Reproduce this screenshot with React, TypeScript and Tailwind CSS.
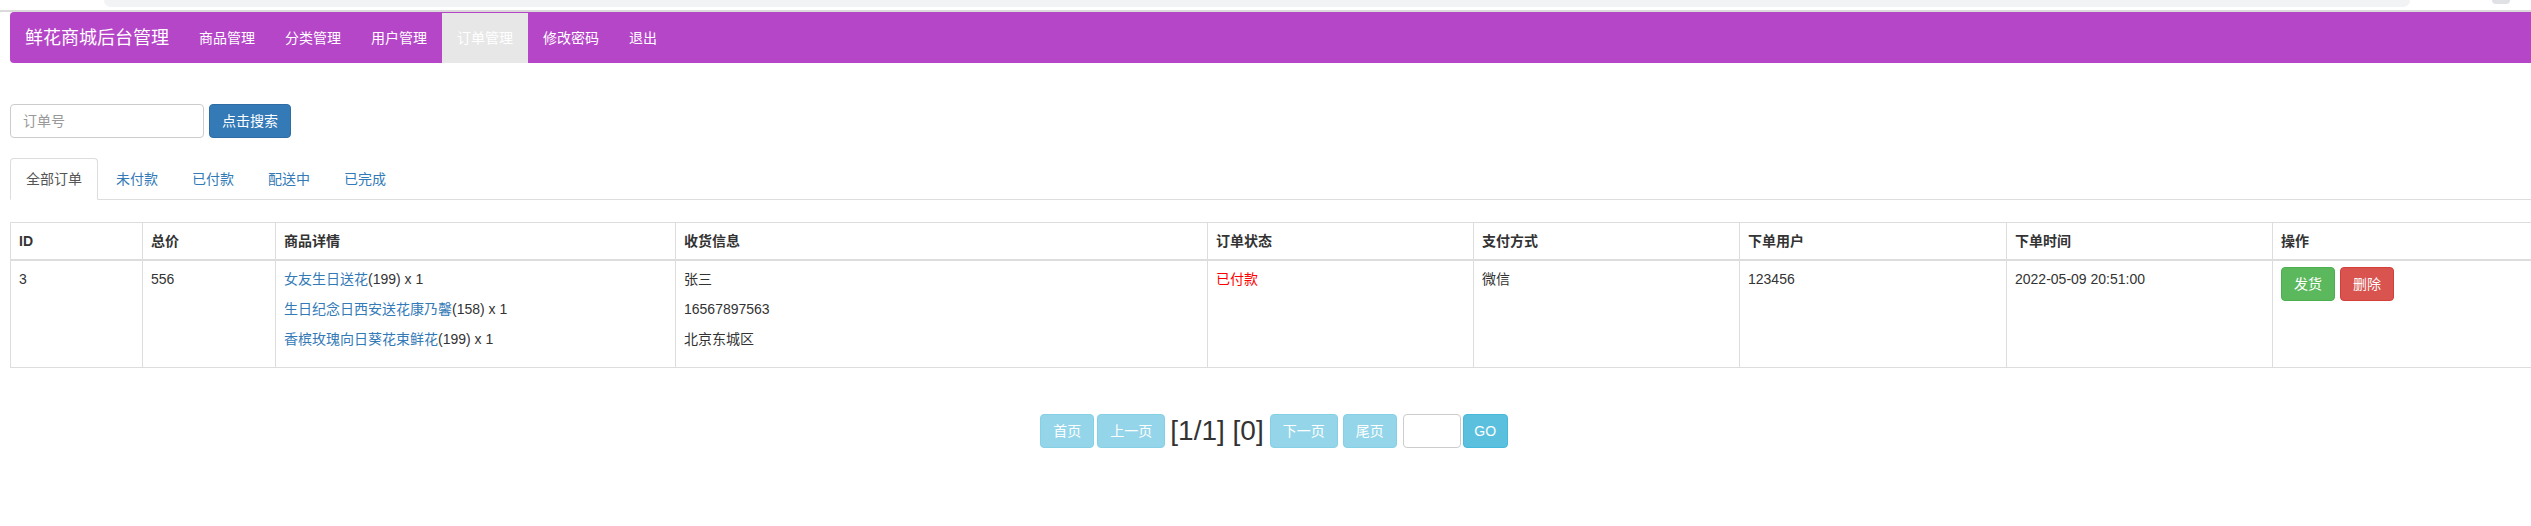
import React from "react";

const navItems = ["商品管理", "分类管理", "用户管理", "订单管理", "修改密码", "退出"];
const tabs = ["全部订单", "未付款", "已付款", "配送中", "已完成"];

const columns = [
  { title: "ID", w: "w-[132px]" },
  { title: "总价", w: "w-[133px]" },
  { title: "商品详情", w: "w-[400px]" },
  { title: "收货信息", w: "w-[532px]" },
  { title: "订单状态", w: "w-[266px]" },
  { title: "支付方式", w: "w-[266px]" },
  { title: "下单用户", w: "w-[267px]" },
  { title: "下单时间", w: "w-[266px]" },
  { title: "操作", w: "w-[266px]" },
];

const goods = [
  { name: "女友生日送花", price: 199, count: 1 },
  { name: "生日纪念日西安送花康乃馨", price: 158, count: 1 },
  { name: "香槟玫瑰向日葵花束鲜花", price: 199, count: 1 },
];

const address = ["张三", "16567897563", "北京东城区"];

const Navbar = () => (
  <nav className="flex h-[51px] pt-[1px] bg-[#b546c8] rounded-[4px]">
    <span className="px-[15px] h-[50px] leading-[50px] text-[18px] text-white">
      鲜花商城后台管理
    </span>
    {navItems.map((item) => (
      <a
        key={item}
        className={`px-[15px] h-[50px] leading-[50px] text-[14px] text-white ${
          item === "订单管理" ? "bg-[#e7e7e7]" : ""
        }`}
      >
        {item}
      </a>
    ))}
  </nav>
);

const SearchBar = () => (
  <div className="flex items-center mt-[41px]">
    <div className="w-[194px] h-[34px] border border-[#cccccc] rounded-[4px] px-[12px] leading-[32px] text-[14px] text-[#999999]">
      订单号
    </div>
    <button className="ml-[5px] w-[82px] h-[34px] bg-[#337ab7] border border-[#2e6da4] rounded-[4px] text-[14px] text-white">
      点击搜索
    </button>
  </div>
);

const Tabs = () => (
  <ul className="flex mt-[20px] border-b border-[#dddddd]">
    {tabs.map((tab, i) => (
      <li key={tab} className="mr-[2px] -mb-[1px]">
        <a
          className={`block px-[15px] py-[10px] leading-5 text-[14px] border rounded-t-[4px] ${
            i === 0
              ? "border-[#dddddd] border-b-white bg-white text-[#555555]"
              : "border-transparent text-[#337ab7]"
          }`}
        >
          {tab}
        </a>
      </li>
    ))}
  </ul>
);

const OrderTable = () => (
  <table className="mt-[22px] w-[2528px] table-fixed border-collapse text-[14px] text-[#333333]">
    <colgroup>
      {columns.map((c) => (
        <col key={c.title} className={c.w} />
      ))}
    </colgroup>
    <thead>
      <tr>
        {columns.map((c) => (
          <th
            key={c.title}
            className="border border-[#dddddd] border-b-2 p-2 leading-5 text-left font-bold"
          >
            {c.title}
          </th>
        ))}
      </tr>
    </thead>
    <tbody>
      <tr className="align-top">
        <td className="border border-[#dddddd] p-2 leading-5">3</td>
        <td className="border border-[#dddddd] p-2 leading-5">556</td>
        <td className="border border-[#dddddd] p-2 leading-5">
          {goods.map((g) => (
            <p key={g.name} className="mb-[10px]">
              <a className="text-[#337ab7]">{g.name}</a>({g.price}) x {g.count}
            </p>
          ))}
        </td>
        <td className="border border-[#dddddd] p-2 leading-5">
          {address.map((a) => (
            <p key={a} className="mb-[10px]">
              {a}
            </p>
          ))}
        </td>
        <td className="border border-[#dddddd] p-2 leading-5 text-[#ff0000]">已付款</td>
        <td className="border border-[#dddddd] p-2 leading-5">微信</td>
        <td className="border border-[#dddddd] p-2 leading-5">123456</td>
        <td className="border border-[#dddddd] p-2 leading-5">2022-05-09 20:51:00</td>
        <td className="border border-[#dddddd] px-2 pt-[6px] leading-5">
          <div className="flex gap-[5px]">
            <button className="h-[34px] px-[12px] bg-[#5cb85c] border border-[#4cae4c] rounded-[4px] text-white">
              发货
            </button>
            <button className="h-[34px] px-[12px] bg-[#d9534f] border border-[#d43f3a] rounded-[4px] text-white">
              删除
            </button>
          </div>
        </td>
      </tr>
    </tbody>
  </table>
);

const PageButton = ({ label, className = "" }: { label: string; className?: string }) => (
  <button
    className={`h-[34px] px-[12px] bg-[#5bc0de] border border-[#46b8da] rounded-[4px] text-[14px] text-white opacity-65 ${className}`}
  >
    {label}
  </button>
);

const Pagination = () => (
  <div className="flex items-center justify-center mt-[46px]">
    <PageButton label="首页" />
    <PageButton label="上一页" className="ml-[3px]" />
    <span className="ml-[5px] text-[28px] leading-[34px] text-[#333333]">[1/1] [0]</span>
    <PageButton label="下一页" className="ml-[6px]" />
    <PageButton label="尾页" className="ml-[5px]" />
    <div className="ml-[6px] w-[58px] h-[34px] border border-[#cccccc] rounded-[4px] bg-white" />
    <button className="ml-[2px] w-[45px] h-[34px] bg-[#5bc0de] border border-[#46b8da] rounded-[4px] text-[14px] text-white">
      GO
    </button>
  </div>
);

export default function App() {
  return (
    <div className="w-[2531px] h-[526px] overflow-hidden bg-white font-['Liberation_Sans','Noto_Sans_CJK_SC',sans-serif]">
      <div className="w-[2548px]">
        <div className="flex h-[10px]">
          <div className="ml-[104px] w-[2306px] h-[7px] bg-[#f1f3f4] rounded-b-[8px]" />
          <div className="ml-[82px] w-[18px] h-[4px] bg-[#dfe1e5] rounded-b-full" />
        </div>
        <div className="h-[2px] bg-[#dadada]" />
        <div className="px-[10px]">
          <Navbar />
          <SearchBar />
          <Tabs />
          <OrderTable />
          <Pagination />
        </div>
      </div>
    </div>
  );
}
